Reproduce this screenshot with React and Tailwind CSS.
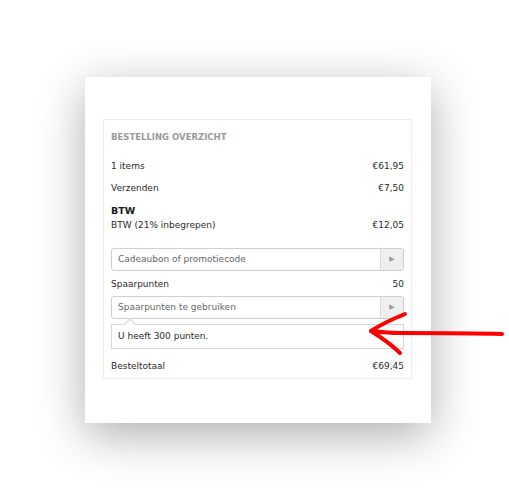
import React from 'react';

const Row = ({ label, value, className = '' }) => (
  <div className={`flex justify-between h-[14px] leading-[14px] ${className}`}>
    <span>{label}</span>
    <span>{value}</span>
  </div>
);

const CodeInput = ({ placeholder, className = '' }) => (
  <div className={`flex border border-[#cfcfcf] rounded-[3px] overflow-hidden bg-white ${className}`}>
    <div className="flex-1 flex items-center pl-[6px] text-[#666]">{placeholder}</div>
    <div className="w-[23px] flex items-center justify-center bg-[#efefef] border-l border-[#dcdcdc] text-[#9a9a9a] text-[7px]">
      ▶
    </div>
  </div>
);

const RedArrow = () => (
  <svg className="absolute left-0 top-0 pointer-events-none" width="509" height="500" viewBox="0 0 509 500">
    <g fill="none" stroke="#ff0000" strokeWidth="4" strokeLinecap="round" strokeLinejoin="round">
      <path d="M502 334 C470 333 430 333 400 333 C390 333 380 332 371 331" />
      <path d="M405 314 C395 318 380 325 371 331 C382 338 392 345 400 353" />
    </g>
  </svg>
);

export default function App() {
  return (
    <div className="relative w-[509px] h-[500px] bg-white overflow-hidden font-['DejaVu_Sans',Verdana,sans-serif] text-[9px] text-[#2a2a2a]">
      <div className="pt-[77px] pl-[85px]">
        <div className="w-[346px] h-[346px] bg-white shadow-[0_12px_44px_rgba(0,0,0,0.32)] pt-[42px] pl-[18px]">
          <div className="w-[309px] h-[260px] border border-[#ececec] px-[7px] pt-[10px]">
            <div className="h-[14px] leading-[14px] font-bold text-[8.5px] text-[#9b9b9b]">BESTELLING OVERZICHT</div>
            <Row label="1 items" value="€61,95" className="mt-[15px]" />
            <Row label="Verzenden" value="€7,50" className="mt-[8px]" />
            <div className="mt-[9px] h-[14px] leading-[14px] font-bold text-[9.5px] text-[#1a1a1a]">BTW</div>
            <Row label="BTW (21% inbegrepen)" value="€12,05" />
            <CodeInput placeholder="Cadeaubon of promotiecode" className="mt-[16px] h-[23px]" />
            <Row label="Spaarpunten" value="50" className="mt-[6px]" />
            <CodeInput placeholder="Spaarpunten te gebruiken" className="mt-[5px] h-[23px]" />
            <div className="relative mt-[5px] h-[25px] border border-[#d6d6d6] bg-white flex items-center pl-[6px]">
              <div className="absolute -top-[5px] left-[14px] w-[8px] h-[8px] bg-white border-l border-t border-[#d6d6d6] rotate-45" />
              U heeft 300 punten.
            </div>
            <Row label="Besteltotaal" value="€69,45" className="mt-[10px]" />
          </div>
        </div>
      </div>
      <RedArrow />
    </div>
  );
}
